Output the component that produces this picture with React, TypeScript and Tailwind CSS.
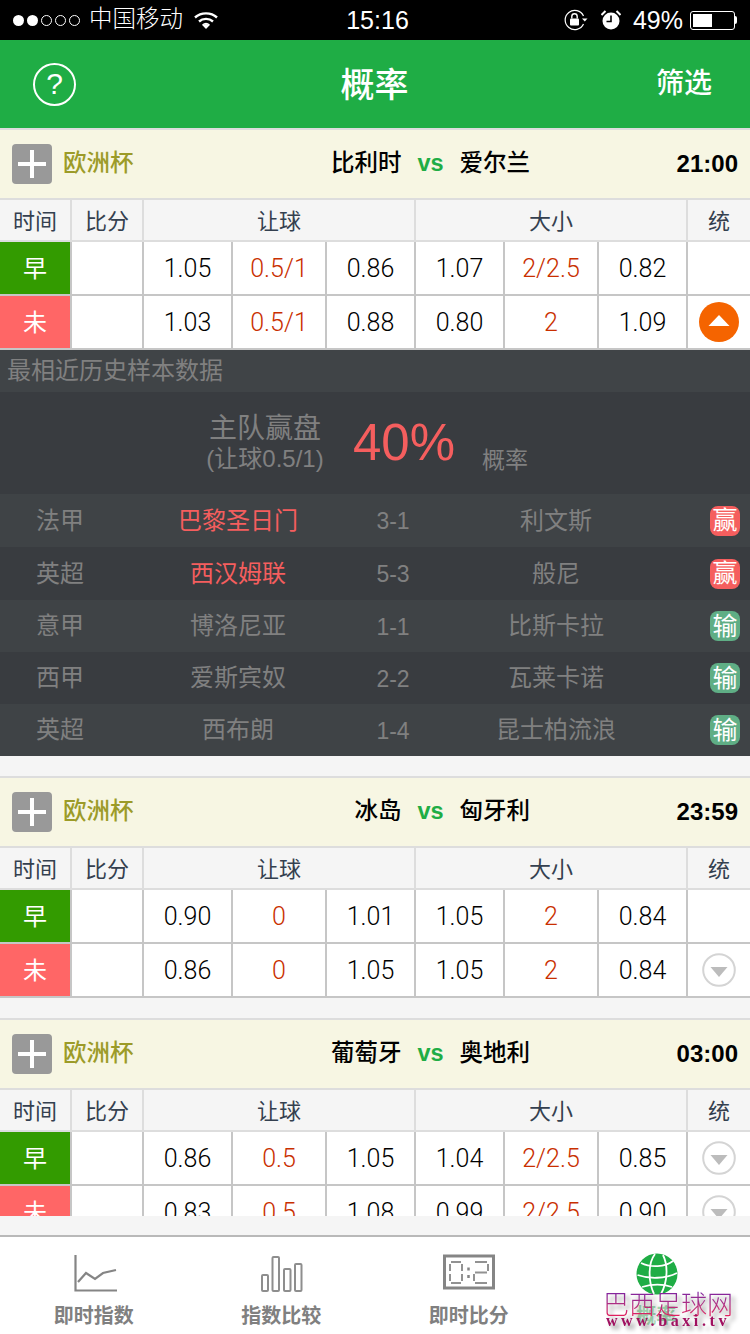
import React from 'react';

type Row = { odds: string[]; stat?: 'up' | 'down' };
type Match = { home: string; away: string; time: string; rows: Row[] };

const matches: Match[] = [
  {
    home: '比利时',
    away: '爱尔兰',
    time: '21:00',
    rows: [
      { odds: ['1.05', '0.5/1', '0.86', '1.07', '2/2.5', '0.82'] },
      { odds: ['1.03', '0.5/1', '0.88', '0.80', '2', '1.09'], stat: 'up' },
    ],
  },
  {
    home: '冰岛',
    away: '匈牙利',
    time: '23:59',
    rows: [
      { odds: ['0.90', '0', '1.01', '1.05', '2', '0.84'] },
      { odds: ['0.86', '0', '1.05', '1.05', '2', '0.84'], stat: 'down' },
    ],
  },
  {
    home: '葡萄牙',
    away: '奥地利',
    time: '03:00',
    rows: [
      { odds: ['0.86', '0.5', '1.05', '1.04', '2/2.5', '0.85'], stat: 'down' },
      { odds: ['0.83', '0.5', '1.08', '0.99', '2/2.5', '0.90'], stat: 'down' },
    ],
  },
];

const samples = [
  { league: '法甲', home: '巴黎圣日门', score: '3-1', away: '利文斯', win: true, h: 'h-[53px]', bg: 'bg-[#3f4346]' },
  { league: '英超', home: '西汉姆联', score: '5-3', away: '般尼', win: true, h: 'h-[53px]', bg: 'bg-[#393c40]' },
  { league: '意甲', home: '博洛尼亚', score: '1-1', away: '比斯卡拉', win: false, h: 'h-[52px]', bg: 'bg-[#3f4346]' },
  { league: '西甲', home: '爱斯宾奴', score: '2-2', away: '瓦莱卡诺', win: false, h: 'h-[52px]', bg: 'bg-[#393c40]' },
  { league: '英超', home: '西布朗', score: '1-4', away: '昆士柏流浪', win: false, h: 'h-[52px]', bg: 'bg-[#3f4346]' },
];

const oddsWidths = ['w-[89px]', 'w-[94px]', 'w-[89px]', 'w-[89px]', 'w-[94px]', 'w-[89px]'];

function StatusBar() {
  return (
    <div className="flex h-10 items-center bg-black text-white">
      <div className="flex w-[346px] items-center pl-[13px]">
        <div className="flex gap-[3px]">
          <span className="h-[11px] w-[11px] rounded-full bg-white" />
          <span className="h-[11px] w-[11px] rounded-full bg-white" />
          <span className="h-[11px] w-[11px] rounded-full border border-white" />
          <span className="h-[11px] w-[11px] rounded-full border border-white" />
          <span className="h-[11px] w-[11px] rounded-full border border-white" />
        </div>
        <span className="ml-[9px] text-[23.5px] font-light leading-none">中国移动</span>
        <svg className="ml-[11px]" width="24" height="18" viewBox="0 0 24 18" fill="none" stroke="white" strokeWidth="2.4">
          <path d="M1 6.5C7 1 17 1 23 6.5" />
          <path d="M5 10.5C9 7 15 7 19 10.5" />
          <path d="M8.5 14C10.500 12.400 13.500 12.400 15.500 14" strokeWidth="1.500" />
          <path d="M12 18l-3.600-3.800c2-1.600 5.200-1.600 7.200 0z" fill="white" stroke="none" />
        </svg>
      </div>
      <span className="w-[63px] text-center text-[25px] leading-none">15:16</span>
      <div className="flex flex-1 items-center justify-end pr-[13px]">
        <svg width="24" height="22" viewBox="0 0 24 22" fill="none">
          <path d="M19.500 7A9.600 9.600 0 1 0 19.500 15" stroke="white" strokeWidth="1.200" />
          <path d="M18 9.500h5.500l-2.700 3z" fill="white" />
          <rect x="6" y="9.500" width="9" height="7" rx="1" fill="white" />
          <path d="M7.800 9.500V7.500a2.700 2.700 0 0 1 5.400 0v2" stroke="white" strokeWidth="1.400" />
        </svg>
        <svg className="ml-[13px]" width="20" height="20" viewBox="0 0 20 20">
          <circle cx="10" cy="11" r="8.500" fill="white" />
          <path d="M10 5.500V11.500H5.500" stroke="black" strokeWidth="1.600" fill="none" />
          <path d="M0.500 5L4.500 1M19.500 5L15.500 1" stroke="white" strokeWidth="2" />
        </svg>
        <span className="ml-[12px] text-[25px] font-light leading-none">49%</span>
        <div className="ml-[7px] flex items-center">
          <div className="h-[19px] w-[45px] rounded-[3px] border border-white p-[2px]">
            <div className="h-full w-[19px] bg-white" />
          </div>
          <div className="h-[8px] w-[2px] rounded-r-sm bg-white" />
        </div>
      </div>
    </div>
  );
}

function Header() {
  return (
    <div className="flex h-[88px] items-center bg-[#1fad45] text-white">
      <div className="flex flex-1 pl-[33px]">
        <div className="flex h-[43px] w-[43px] items-center justify-center rounded-full border-2 border-white text-[30px] leading-none">
          ?
        </div>
      </div>
      <span className="pl-[4px] pt-[1px] text-[34px] font-medium leading-none">概率</span>
      <div className="flex flex-1 justify-end pr-[38px]">
        <span className="text-[28px] font-medium leading-none">筛选</span>
      </div>
    </div>
  );
}

function PlusBox() {
  return (
    <div className="relative h-10 w-10 shrink-0 rounded bg-[#999999]">
      <span className="absolute left-[6px] top-[18px] h-1 w-7 bg-white" />
      <span className="absolute left-[18px] top-[6px] h-7 w-1 bg-white" />
    </div>
  );
}

function StatButton({ type }: { type?: 'up' | 'down' }) {
  if (type === 'up') {
    return (
      <svg width="40" height="40" viewBox="0 0 40 40">
        <circle cx="20" cy="20" r="20" fill="#f56400" />
        <path d="M20 13L30.500 24H9.500z" fill="white" />
      </svg>
    );
  }
  if (type === 'down') {
    return (
      <svg width="34" height="34" viewBox="0 0 34 34">
        <circle cx="17" cy="17" r="15.800" fill="white" stroke="#d4d4d4" strokeWidth="2" />
        <path d="M8.500 14H25.500L17 24z" fill="#bcbcbc" />
      </svg>
    );
  }
  return null;
}

function MatchCard({ match }: { match: Match }) {
  return (
    <div>
      <div className="flex h-[72px] items-center border-y-2 border-[#dddddd] bg-[#f7f6e3] pl-3 pr-3 text-[23.5px] leading-none">
        <PlusBox />
        <span className="ml-[11px] font-medium text-[#9c9b28]">欧洲杯</span>
        <span className="w-[268px] text-right font-medium text-black">{match.home}</span>
        <span className="w-[58px] text-center font-bold text-[#1fad45]">vs</span>
        <span className="font-medium text-black">{match.away}</span>
        <span className="ml-auto text-[24px] font-bold text-black">{match.time}</span>
      </div>

      {/* head */}
      <div className="flex h-[42px] border-b-2 border-[#dddddd] bg-[#f5f5f5] text-[22px] text-[#34404f]">
        <div className="flex w-[72px] items-center justify-center border-r-2 border-[#dddddd] pt-[2px]">时间</div>
        <div className="flex w-[72px] items-center justify-center border-r-2 border-[#dddddd] pt-[2px]">比分</div>
        <div className="flex w-[272px] items-center justify-center border-r-2 border-[#dddddd] pt-[2px]">让球</div>
        <div className="flex w-[272px] items-center justify-center border-r-2 border-[#dddddd] pt-[2px]">大小</div>
        <div className="flex flex-1 items-center justify-center pt-[2px]">统</div>
      </div>

      {match.rows.map((row, i) => (
        <div key={i} className="flex h-[54px] border-b-2 border-[#c6c6c6] bg-white text-[25px] text-black">
          <div
            className={`flex w-[72px] items-center justify-center border-r-2 border-[#c6c6c6] pt-[2px] text-[24px] text-white ${
              i === 0 ? 'bg-[#339b00]' : 'bg-[#ff6666]'
            }`}
          >
            {i === 0 ? '早' : '未'}
          </div>
          <div className="w-[72px] border-r-2 border-[#c6c6c6]" />
          {row.odds.map((odd, j) => (
            <div
              key={j}
              className={`flex items-center justify-center border-r-2 border-[#c6c6c6] pt-[2px] font-['Roboto',sans-serif] font-light ${oddsWidths[j]} ${
                j === 1 || j === 4 ? 'text-[#c92f00]' : ''
              }`}
            >
              {odd}
            </div>
          ))}
          <div className="flex flex-1 items-center justify-center">
            <StatButton type={row.stat} />
          </div>
        </div>
      ))}
    </div>
  );
}

function SamplePanel() {
  return (
    <div className="text-[#808080]">
      <div className="flex h-[42px] items-center bg-[#404447] pl-[7px] text-[24px] leading-none">最相近历史样本数据</div>
      <div className="flex h-[102px] bg-[#393c40]">
        <div className="ml-[200px] flex w-[130px] flex-col items-center pt-[21px]">
          <span className="text-[28px] leading-[32px]">主队赢盘</span>
          <span className="text-[24px] leading-[28px]">(让球0.5/1)</span>
        </div>
        <span className="ml-[23px] pt-[21px] text-[51px] leading-[60px] text-[#f55e5e]">40%</span>
        <span className="ml-[27px] pt-[54px] text-[23px] leading-[28px]">概率</span>
      </div>
      {samples.map((s, i) => (
        <div key={i} className={`flex items-center text-[24px] ${s.h} ${s.bg}`}>
          <div className="w-[120px] text-center">{s.league}</div>
          <div className={`w-[236px] text-center ${s.win ? 'text-[#f55e5e]' : ''}`}>{s.home}</div>
          <div className="w-[74px] pt-[2px] text-center text-[23px]">{s.score}</div>
          <div className="w-[252px] text-center">{s.away}</div>
          <div className="flex flex-1 justify-end pr-[10px]">
            <span
              className={`flex h-[30px] w-[30px] items-center justify-center rounded-lg text-[25px] leading-none text-white ${
                s.win ? 'bg-[#f55e5e]' : 'bg-[#5fae85]'
              }`}
            >
              {s.win ? '赢' : '输'}
            </span>
          </div>
        </div>
      ))}
    </div>
  );
}

function TabBar() {
  return (
    <div className="relative flex h-[99px] border-t-2 border-[#b9b9b9] bg-white text-[20px] font-semibold text-[#808080]">
      <div className="flex flex-1 flex-col items-center pt-[17px]">
        <svg className="ml-[4px]" width="44" height="40" viewBox="0 0 44 40" fill="none" stroke="#858585">
          <path d="M1.500 1V36.500H43" strokeWidth="2.200" />
          <path d="M4 28L12 19L21 25L29 19L42 16" strokeWidth="2.200" />
        </svg>
        <span className="mt-[8px] leading-[28px]">即时指数</span>
      </div>
      <div className="flex flex-1 flex-col items-center pt-[17px]">
        <svg className="ml-[2px]" width="44" height="40" viewBox="0 0 44 40" fill="none" stroke="#8e8e8e" strokeWidth="2">
          <rect x="2" y="21" width="6" height="16" rx="1" />
          <rect x="12.500" y="3" width="6.500" height="34" rx="1" />
          <rect x="24" y="15" width="6.500" height="22" rx="1" />
          <rect x="35" y="10" width="6.500" height="27" rx="1" />
        </svg>
        <span className="mt-[8px] leading-[28px]">指数比较</span>
      </div>
      <div className="flex flex-1 flex-col items-center pt-[17px]">
        <svg width="52" height="40" viewBox="0 0 52 40" fill="none" stroke="#929292" strokeWidth="2">
          <rect x="1.500" y="2" width="49" height="32" stroke="#858585" strokeWidth="3" />
          <path d="M8 8H18M7 10V17M19 10V17M7 20V27M19 20V27M8 29H18" />
          <path d="M32 8H44M45 10V17M32 18.500H44M31 20V27M32 29H44" />
          <path d="M25.500 13.500V16.500M25.500 21V24" strokeWidth="2.500" stroke="#858585" />
        </svg>
        <span className="mt-[8px] leading-[28px]">即时比分</span>
      </div>
      <div className="flex flex-1 flex-col items-center pt-[16px] text-[#a5d9b3]">
        <svg className="ml-[1px]" width="42" height="42" viewBox="0 0 42 42" fill="none" stroke="white" strokeWidth="1.800">
          <circle cx="21" cy="21" r="20.500" fill="#1fad45" stroke="none" />
          <path d="M19 1C12 10 12 28 18 41" />
          <path d="M27 2C32 12 32 28 25 41" />
          <path d="M5 10C15 15 29 14 37 8" />
          <path d="M1.500 22C13 26 29 26 41 20" />
          <path d="M6 34C16 31 27 31 36 34" />
        </svg>
        <span className="mt-[7px] leading-[28px]">概率</span>
      </div>

      {/* site watermark over the last tab */}
      <div className="absolute left-[603px] top-[54px] flex w-[130px] flex-col items-center font-normal drop-shadow-[4px_4px_2px_rgba(0,0,0,0.4)]">
        <span className="bg-gradient-to-b from-[#7b1fa2] to-[#f01050] bg-clip-text text-[26px] font-light leading-[28px] text-transparent">
          巴西足球网
        </span>
        <span className="-mt-1 font-['Liberation_Serif',serif] text-[16px] font-bold leading-[12px] tracking-[3.6px] text-[#a01060]">
          www.baxi.tv
        </span>
      </div>
    </div>
  );
}

export default function App() {
  return (
    <div className="flex h-[1334px] w-[750px] flex-col overflow-hidden bg-[#f5f5f5] font-['Liberation_Sans','Noto_Sans_CJK_SC',sans-serif]">
      <StatusBar />
      <Header />
      <div className="h-[1088px] overflow-hidden">
        <MatchCard match={matches[0]} />
        <SamplePanel />
        <div className="mt-5">
          <MatchCard match={matches[1]} />
        </div>
        <div className="mt-5">
          <MatchCard match={matches[2]} />
        </div>
      </div>
      <div className="h-[19px]" />
      <TabBar />
    </div>
  );
}
